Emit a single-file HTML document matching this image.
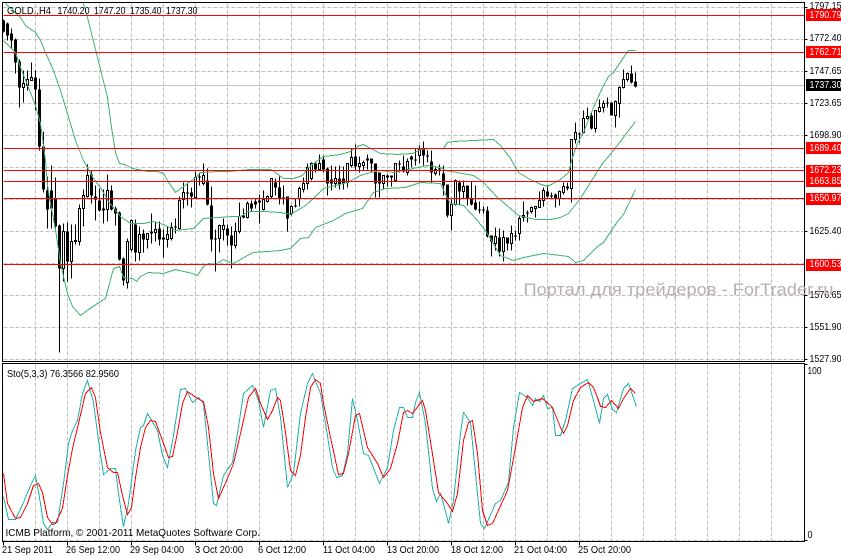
<!DOCTYPE html>
<html lang="en">
<head>
<meta charset="utf-8">
<title>GOLD H4</title>
<style>
html,body{margin:0;padding:0;background:#fff;width:841px;height:558px;overflow:hidden}
svg{display:block;position:absolute;left:0;top:0}
text{font-family:"Liberation Sans","DejaVu Sans",sans-serif;font-size:10.5px;fill:#000}
.w{fill:#fff}
</style>
</head>
<body>
<svg width="841" height="558" viewBox="0 0 841 558" xmlns="http://www.w3.org/2000/svg">
<rect width="841" height="558" fill="#fff"/>
<g transform="translate(.5 .5)" shape-rendering="crispEdges" fill="none">
<!-- grid -->
<path stroke="#c0c0c0" stroke-dasharray="4 2" d="M3 7H804M3 39H804M3 71H804M3 103H804M3 135H804M3 167H804M3 199H804M3 231H804M3 263H804M3 295H804M3 327H804M3 359H804M3 540H804"/>
<path stroke="#c0c0c0" stroke-dasharray="4 2" d="M35 3V361M67 3V361M99 3V361M131 3V361M163 3V361M195 3V361M227 3V361M259 3V361M291 3V361M323 3V361M355 3V361M387 3V361M419 3V361M451 3V361M483 3V361M515 3V361M547 3V361M579 3V361M611 3V361M643 3V361M675 3V361M707 3V361M739 3V361M771 3V361"/>
<path stroke="#c0c0c0" stroke-dasharray="4 2" d="M35 364V541M67 364V541M99 364V541M131 364V541M163 364V541M195 364V541M227 364V541M259 364V541M291 364V541M323 364V541M355 364V541M387 364V541M419 364V541M451 364V541M483 364V541M515 364V541M547 364V541M579 364V541M611 364V541M643 364V541M675 364V541M707 364V541M739 364V541M771 364V541"/>
<path stroke="#c0c0c0" d="M3 85H804"/>
<!-- wicks -->
<path stroke="#000" d="M3 19V32M7 22V40M11 28V48M15 38V73M19 59V107M23 70V102M27 70V90M31 62V80M35 70V110M39 78V150M43 131V192M47 176V228M51 165V228M55 177V230M59 224V352M63 223V281M67 222V281M71 224V278M75 224V244M79 204V245M83 189V226M87 164V197M91 170V203M95 185V220M99 188V211M103 189V223M107 174V221M111 185V210M115 206V225M119 211V260M123 257V285M127 238V288M131 219V251M135 219V261M139 226V260M143 229V252M147 233V248M151 213V243M155 221V241M159 221V245M163 229V257M167 226V247M171 222V240M175 218V233M179 196V230M183 182V208M187 182V205M191 187V207M195 171V198M199 172V185M203 163V185M207 168V205M211 186V251M215 229V271M219 224V252M223 218V240M227 224V245M231 226V268M235 222V248M239 202V233M243 208V218M247 201V218M251 200V211M255 198V208M259 194V223M263 190V210M267 195V202M271 178V198M275 178V195M279 176V204M283 185V204M287 196V231M291 205V215M295 198V207M299 186V206M303 177V192M307 163V189M311 162V180M315 162V172M319 154V169M323 155V172M327 167V195M331 165V190M335 166V187M339 165V189M343 166V189M347 163V187M351 148V167M355 144V170M359 156V172M363 160V170M367 154V169M371 158V172M375 163V197M379 172V197M383 175V188M387 174V186M391 175V186M395 163V181M399 160V172M403 155V172M407 158V175M411 155V167M415 148V165M419 145V163M423 141V165M427 150V162M431 150V183M435 167V175M439 164V175M443 165V195M447 184V217M451 199V230M455 179V205M459 180V205M463 180V198M467 185V205M471 181V205M475 185V210M479 201V213M483 206V213M487 206V237M491 235V256M495 227V250M499 228V256M503 230V261M507 237V250M511 225V250M515 230V240M519 216V240M523 201V221M527 210V222M531 206V213M535 206V217M539 191V207M543 187V206M547 185V197M551 192V198M555 193V207M559 190V205M563 182V194M567 182V190M571 139V202M575 122V143M579 132V142M583 110V133M587 107V119M591 112V129M595 110V132M599 99V112M603 100V112M607 97V107M611 102V115M615 100V127M619 86V117M623 69V88M627 72V81M631 65V83M635 72V87"/>
<!-- black bodies -->
<path stroke="#000" stroke-width="3" d="M3 20V31M7 23V35M11 33V40M15 39V62M19 61V87M35 77V89M39 89V146M43 146V189M47 190V209M51 190V208M55 198V226M59 225V268M67 231V261M91 174V195M95 196V199M99 200V210M103 208V210M111 190V209M115 208V213M119 212V259M123 258V280M135 224V252M143 233V239M151 231V233M159 228V239M163 237V239M175 226V227M187 192V193M191 192V196M199 176V177M207 180V204M211 205V239M215 238V239M227 228V235M231 235V245M243 215V217M251 203V208M255 201V204M259 200V202M275 182V187M279 187V198M283 197V198M287 196V218M295 205V206M315 163V169M323 159V169M327 168V183M331 179V183M339 178V184M343 178V183M355 156V166M367 158V160M371 158V163M375 163V183M379 172V183M387 175V177M391 175V177M399 163V164M403 166V171M411 156V159M415 159V160M423 149V155M427 155V156M431 161V172M439 168V169M443 173V185M447 184V215M459 182V191M467 185V198M471 198V204M475 202V209M479 209V210M483 209V210M487 210V236M491 235V241M499 237V251M507 237V243M515 235V236M527 212V213M547 191V196M551 195V196M555 194V198M567 186V188M579 133V134M591 115V128M607 102V103M611 102V115M631 73V82M635 81V86"/>
<!-- white bodies -->
<path stroke="#000" fill="#fff" d="M22 83h2v4h-2zM26 79h2v6h-2zM30 77h2v3h-2zM62 231h2v37h-2zM70 241h2v20h-2zM74 240h2v1h-2zM78 208h2v33h-2zM82 195h2v13h-2zM86 175h2v21h-2zM106 190h2v19h-2zM126 241h2v41h-2zM130 220h2v29h-2zM138 234h2v18h-2zM146 233h2v6h-2zM154 229h2v3h-2zM166 234h2v5h-2zM170 227h2v11h-2zM178 200h2v28h-2zM182 192h2v7h-2zM194 177h2v20h-2zM202 175h2v8h-2zM218 225h2v13h-2zM222 225h2v4h-2zM234 231h2v14h-2zM238 216h2v15h-2zM246 203h2v14h-2zM262 199h2v10h-2zM266 196h2v5h-2zM270 178h2v18h-2zM290 206h2v7h-2zM298 188h2v10h-2zM302 183h2v6h-2zM306 167h2v16h-2zM310 163h2v15h-2zM318 163h2v6h-2zM334 178h2v5h-2zM346 163h2v19h-2zM350 157h2v8h-2zM358 163h2v3h-2zM362 162h2v3h-2zM382 175h2v8h-2zM394 163h2v17h-2zM406 161h2v11h-2zM418 149h2v6h-2zM434 169h2v4h-2zM450 204h2v11h-2zM454 180h2v24h-2zM462 186h2v5h-2zM494 236h2v7h-2zM502 237h2v14h-2zM510 233h2v10h-2zM518 218h2v15h-2zM522 215h2v2h-2zM530 207h2v4h-2zM534 206h2v2h-2zM538 200h2v7h-2zM542 190h2v10h-2zM558 191h2v7h-2zM562 186h2v6h-2zM570 139h2v49h-2zM574 132h2v7h-2zM582 118h2v14h-2zM586 116h2v2h-2zM594 110h2v18h-2zM598 107h2v4h-2zM602 103h2v4h-2zM614 101h2v14h-2zM618 87h2v16h-2zM622 79h2v8h-2zM626 73h2v6h-2z"/>
<!-- bollinger -->
<g stroke="#3cb371">
<polyline points="83,3 87,17 92,37 97,57 102,77 107,97 111,127 115,152 119,163 124,164 132,168 147,171 157,171 163,173 167,180 175,192 187,183 194,178 200,172 218,171 228,171 249,169 262,169 270,169 275,172 283,178 293,178 302,175 308,167 320,158 323,156 340,154 350,151 357,146 363,144 372,149 380,153 397,154 412,153 420,149 430,148 443,148 447,142 453,141 473,140 493,139 500,145 510,158 518,172 528,178 538,183 547,186 560,179 568,172 572,157 577,143 583,132 593,107 602,87 608,76 613,72 623,57 628,50 635,50"/>
<polyline points="5,3 20,17 25,25 35,32 40,40 45,52 53,70 60,90 67,113 75,140 83,160 93,178 100,187 108,201 120,216 130,223 143,223 153,221 163,224 175,230 193,228 203,218 233,216 240,216 248,211 263,211 280,212 290,214 305,205 313,198 323,188 347,182 360,175 370,172 380,170 393,172 413,168 427,165 440,167 445,170 473,175 483,182 497,197 510,208 518,215 535,219 550,219 560,217 568,213 580,198 588,185 602,163 613,150 635,121"/>
<polyline points="3,40 15,52 20,67 28,87 35,105 40,123 45,160 47,185 50,203 55,229 60,263 67,293 72,306 80,315 88,309 97,303 105,298 113,268 119,266 123,277 132,278 136,281 140,276 148,272 163,273 175,269 192,273 197,275 203,266 208,263 215,264 223,259 233,263 247,255 253,252 280,250 290,248 300,238 308,237 315,227 333,220 345,213 362,208 373,192 385,188 405,187 420,182 440,183 447,198 450,203 463,205 477,220 487,233 500,255 513,260 523,257 543,253 560,255 568,256 575,262 583,260 597,246 603,242 617,221 623,214 635,189"/>
</g>
<!-- red horizontal lines -->
<path stroke="#f00" d="M3 15H804M3 52H804M3 148H804M3 170H804M3 181H804M3 198H804M3 264H804"/>
<!-- stochastic -->
<polyline stroke="#20b2aa" points="3,496 8,519 15,519 23,502 30,485 35,475 40,503 43,523 47,529 52,522 57,522 63,483 68,443 72,430 77,420 82,393 87,380 93,402 98,440 103,474 110,468 115,468 118,493 123,526 128,503 135,450 140,427 143,425 147,413 157,430 162,455 167,467 173,435 180,389 185,388 192,402 198,397 203,403 208,453 213,503 216,505 223,475 232,462 237,433 243,393 252,385 258,400 263,427 270,390 275,388 280,417 287,487 293,473 300,413 307,383 312,373 320,393 325,423 332,467 336,477 342,475 347,453 352,398 357,420 363,453 368,455 379,483 387,467 393,430 399,407 403,407 407,417 412,417 415,402 419,392 425,423 432,488 436,501 440,493 443,503 448,523 453,500 460,433 463,412 470,422 475,473 480,523 484,528 495,503 500,500 508,482 513,427 519,392 527,397 532,405 535,398 539,401 543,395 547,408 552,407 555,435 560,435 565,420 572,388 580,383 587,379 593,400 599,423 603,398 607,394 612,409 616,412 623,388 628,383 636,406"/>
<polyline stroke="#f00" points="3,473 7,503 15,518 20,517 27,503 33,485 38,483 42,492 47,517 52,524 55,523 62,508 67,475 72,448 78,423 85,393 91,387 95,397 100,432 107,467 113,472 117,472 122,495 127,514 131,507 135,477 140,447 145,427 150,420 155,421 163,443 168,457 172,456 177,432 182,403 187,391 197,398 203,401 208,427 213,473 218,498 227,478 233,463 240,433 248,397 255,388 260,403 267,419 272,410 277,397 280,400 285,432 290,470 295,475 300,455 305,417 310,387 315,379 320,383 323,403 330,437 338,474 343,473 348,453 355,415 359,413 367,447 377,463 383,477 390,468 397,443 403,412 407,410 412,413 422,400 425,410 433,460 438,492 447,503 452,511 457,493 463,440 468,422 472,420 477,453 482,510 487,525 492,523 507,490 515,447 522,407 527,395 533,401 542,398 552,407 560,427 563,433 567,425 573,400 580,387 588,382 593,387 597,397 600,406 605,407 611,400 618,408 623,398 630,388 635,393"/>
<!-- frames -->
<path stroke="#000" d="M2 2H804V361H2ZM2 363H804V541H2Z"/>
<!-- axis ticks -->
<path stroke="#000" d="M804 7H807M804 39H807M804 71H807M804 103H807M804 135H807M804 231H807M804 295H807M804 327H807M804 359H807M804 364H807M804 540H807M3 541V545M67 541V545M131 541V545M195 541V545M259 541V545M323 541V545M387 541V545M451 541V545M515 541V545M579 541V545"/>
<!-- price boxes -->
<g stroke="none">
<rect x="805.5" y="8.5" width="36" height="12" fill="#f00"/>
<rect x="805.5" y="45.5" width="36" height="12" fill="#f00"/>
<rect x="805.5" y="78.5" width="36" height="12" fill="#000"/>
<rect x="805.5" y="141.5" width="36" height="12" fill="#f00"/>
<rect x="805.5" y="164.5" width="36" height="11" fill="#f00"/>
<rect x="805.5" y="175.5" width="36" height="11" fill="#f00"/>
<rect x="805.5" y="192.5" width="36" height="12" fill="#f00"/>
<rect x="805.5" y="258.5" width="36" height="12" fill="#f00"/>
</g>
</g>

<!-- labels -->
<text x="7" y="14" textLength="44" lengthAdjust="spacingAndGlyphs">GOLD.,H4</text>
<text x="57.5" y="14" textLength="32" lengthAdjust="spacingAndGlyphs">1740.20</text>
<text x="94" y="14" textLength="31.5" lengthAdjust="spacingAndGlyphs">1747.20</text>
<text x="130" y="14" textLength="31.5" lengthAdjust="spacingAndGlyphs">1735.40</text>
<text x="166" y="14" textLength="31.5" lengthAdjust="spacingAndGlyphs">1737.30</text>

<text x="809.5" y="9" textLength="32" lengthAdjust="spacingAndGlyphs">1797.15</text>
<text x="809.5" y="41" textLength="32" lengthAdjust="spacingAndGlyphs">1772.40</text>
<text x="809.5" y="74" textLength="32" lengthAdjust="spacingAndGlyphs">1747.65</text>
<text x="809.5" y="106" textLength="32" lengthAdjust="spacingAndGlyphs">1723.65</text>
<text x="809.5" y="138" textLength="32" lengthAdjust="spacingAndGlyphs">1698.90</text>
<text x="809.5" y="234" textLength="32" lengthAdjust="spacingAndGlyphs">1625.40</text>
<text x="809.5" y="298" textLength="32" lengthAdjust="spacingAndGlyphs">1576.65</text>
<text x="809.5" y="330" textLength="32" lengthAdjust="spacingAndGlyphs">1551.90</text>
<text x="809.5" y="362" textLength="32" lengthAdjust="spacingAndGlyphs">1527.90</text>

<text class="w" x="809.5" y="18" textLength="32" lengthAdjust="spacingAndGlyphs">1790.79</text>
<text class="w" x="809.5" y="55" textLength="32" lengthAdjust="spacingAndGlyphs">1762.71</text>
<text class="w" x="809.5" y="88" textLength="32" lengthAdjust="spacingAndGlyphs">1737.30</text>
<text class="w" x="809.5" y="151" textLength="32" lengthAdjust="spacingAndGlyphs">1689.40</text>
<text class="w" x="809.5" y="173" textLength="32" lengthAdjust="spacingAndGlyphs">1672.23</text>
<text class="w" x="809.5" y="184" textLength="32" lengthAdjust="spacingAndGlyphs">1663.85</text>
<text class="w" x="809.5" y="201" textLength="32" lengthAdjust="spacingAndGlyphs">1650.97</text>
<text class="w" x="809.5" y="267" textLength="32" lengthAdjust="spacingAndGlyphs">1600.53</text>

<text x="523.5" y="295" textLength="310" lengthAdjust="spacingAndGlyphs" style="font-size:16.5px;fill:#b8aeae">Портал для трейдеров - ForTrader.ru</text>

<text x="7" y="377" textLength="112" lengthAdjust="spacingAndGlyphs">Sto(5,3,3) 76.3566 82.9560</text>
<text x="5.5" y="536" textLength="254.5" lengthAdjust="spacingAndGlyphs">ICMB Platform, © 2001-2011 MetaQuotes Software Corp.</text>
<text x="807.5" y="374" textLength="14" lengthAdjust="spacingAndGlyphs">100</text>
<text x="807.5" y="538" textLength="5" lengthAdjust="spacingAndGlyphs">0</text>

<text x="2" y="553" textLength="51" lengthAdjust="spacingAndGlyphs">21 Sep 2011</text>
<text x="66" y="553" textLength="54" lengthAdjust="spacingAndGlyphs">26 Sep 12:00</text>
<text x="130" y="553" textLength="54" lengthAdjust="spacingAndGlyphs">29 Sep 04:00</text>
<text x="195" y="553" textLength="48" lengthAdjust="spacingAndGlyphs">3 Oct 20:00</text>
<text x="258" y="553" textLength="48" lengthAdjust="spacingAndGlyphs">6 Oct 12:00</text>
<text x="323" y="553" textLength="52" lengthAdjust="spacingAndGlyphs">11 Oct 04:00</text>
<text x="387" y="553" textLength="52" lengthAdjust="spacingAndGlyphs">13 Oct 20:00</text>
<text x="451" y="553" textLength="52" lengthAdjust="spacingAndGlyphs">18 Oct 12:00</text>
<text x="514" y="553" textLength="53" lengthAdjust="spacingAndGlyphs">21 Oct 04:00</text>
<text x="578" y="553" textLength="53" lengthAdjust="spacingAndGlyphs">25 Oct 20:00</text>
</svg>
</body>
</html>
